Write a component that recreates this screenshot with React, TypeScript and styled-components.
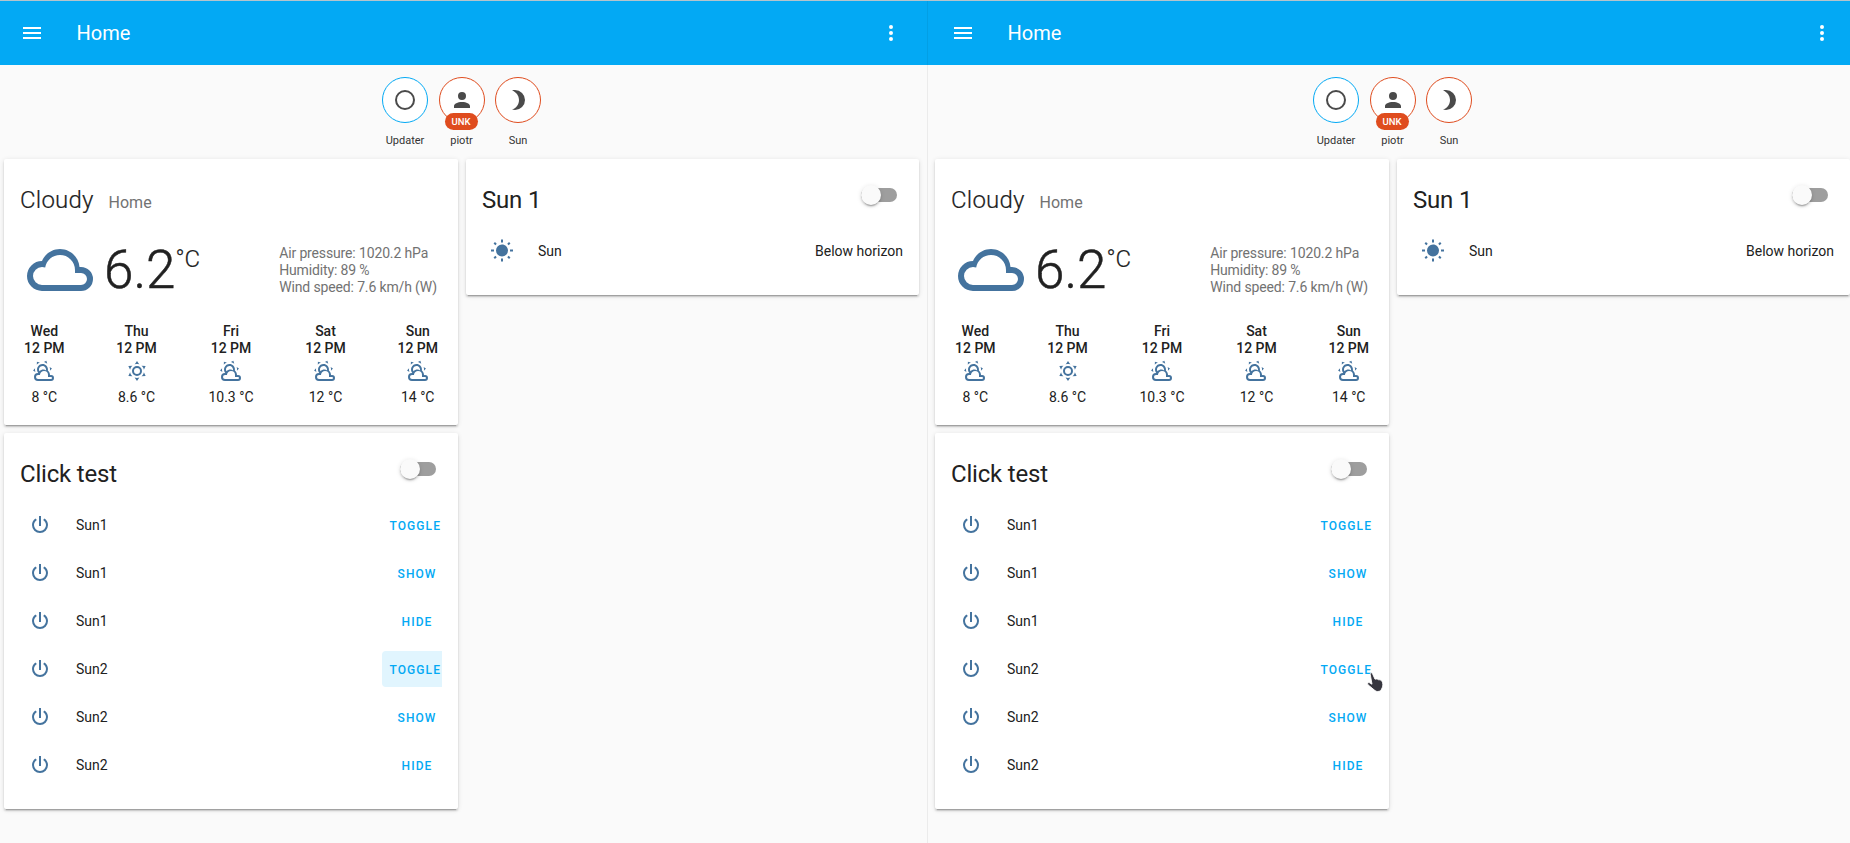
import React from "react";
import styled, { createGlobalStyle } from "styled-components";

const Global = createGlobalStyle`
  html, body { margin: 0; padding: 0; height: 843px; overflow: hidden; background: #fafafa; }
  body { font-family: Roboto, "Noto Sans", sans-serif; color: #212121; }
`;

const P = {
  menu: "M3,6H21V8H3V6M3,11H21V13H3V11M3,16H21V18H3V16Z",
  dots: "M12,16A2,2 0 0,1 14,18A2,2 0 0,1 12,20A2,2 0 0,1 10,18A2,2 0 0,1 12,16M12,10A2,2 0 0,1 14,12A2,2 0 0,1 12,14A2,2 0 0,1 10,12A2,2 0 0,1 12,10M12,4A2,2 0 0,1 14,6A2,2 0 0,1 12,8A2,2 0 0,1 10,6A2,2 0 0,1 12,4Z",
  account: "M12,4A4,4 0 0,1 16,8A4,4 0 0,1 12,12A4,4 0 0,1 8,8A4,4 0 0,1 12,4M12,14C16.42,14 20,15.79 20,18V20H4V18C4,15.79 7.58,14 12,14Z",
  radio: "M12,20A8,8 0 0,1 4,12A8,8 0 0,1 12,4A8,8 0 0,1 20,12A8,8 0 0,1 12,20M12,2A10,10 0 0,0 2,12A10,10 0 0,0 12,22A10,10 0 0,0 22,12A10,10 0 0,0 12,2Z",
  moon: "M9,2C7.95,2 6.95,2.16 6,2.46C10.06,3.73 13,7.5 13,12C13,16.5 10.06,20.27 6,21.54C6.95,21.84 7.95,22 9,22A10,10 0 0,0 19,12A10,10 0 0,0 9,2Z",
  cloudy: "M6,19A5,5 0 0,1 1,14A5,5 0 0,1 6,9C7,6.65 9.3,5 12,5C15.43,5 18.24,7.66 18.5,11.03L19,11A4,4 0 0,1 23,15A4,4 0 0,1 19,19H6M19,13H17V12A5,5 0 0,0 12,7C9.5,7 7.45,8.82 7.06,11.19C6.73,11.07 6.37,11 6,11A3,3 0 0,0 3,14A3,3 0 0,0 6,17H19A2,2 0 0,0 21,15A2,2 0 0,0 19,13Z",
  partly: "M12.74,5.47C15.1,6.5 16.35,9.03 15.92,11.46C17.19,12.56 18,14.19 18,16V16.17C18.31,16.06 18.65,16 19,16A3,3 0 0,1 22,19A3,3 0 0,1 19,22H6A4,4 0 0,1 2,18A4,4 0 0,1 6,14H6.27C5,12.45 4.6,10.24 5.5,8.26C6.72,5.5 9.97,4.24 12.74,5.47M11.93,7.3C10.16,6.5 8.09,7.31 7.31,9.07C6.85,10.09 6.93,11.25 7.41,12.17C8.5,11.17 10,10.58 11.5,10.58C12.5,10.58 13.42,10.89 14.14,11.53C14.13,9.69 13.5,8 11.93,7.3M13.55,3.64C13,3.4 12.45,3.23 11.88,3.12L14.37,1.82L15.27,4.71C14.76,4.29 14.19,3.93 13.55,3.64M6.09,4.44C5.6,4.79 5.17,5.19 4.8,5.63L4.91,2.82L7.87,3.5C7.25,3.71 6.65,4.03 6.09,4.44M18,9.71C17.91,9.12 17.78,8.55 17.59,8L19.97,9.5L17.92,11.73C18.03,11.08 18.05,10.4 18,9.71M3.04,11.3C3.11,11.9 3.24,12.47 3.43,13L1.06,11.5L3.1,9.28C3,9.93 2.97,10.61 3.04,11.3M19,18H16V16A4,4 0 0,0 12,12C10,12 8.4,13.37 8.08,15.27L8,16H6A2,2 0 0,0 4,18A2,2 0 0,0 6,20H19A1,1 0 0,0 20,19A1,1 0 0,0 19,18Z",
  sunnyOutline: "M12,7A5,5 0 0,1 17,12A5,5 0 0,1 12,17A5,5 0 0,1 7,12A5,5 0 0,1 12,7M12,9A3,3 0 0,0 9,12A3,3 0 0,0 12,15A3,3 0 0,0 15,12A3,3 0 0,0 12,9M12,2L14.39,5.42C13.65,5.15 12.84,5 12,5C11.16,5 10.35,5.15 9.61,5.42L12,2M3.34,7L7.5,6.65C6.9,7.16 6.36,7.78 5.94,8.5C5.5,9.24 5.25,10 5.11,10.79L3.34,7M3.36,17L5.12,13.23C5.26,14 5.53,14.78 5.95,15.5C6.37,16.24 6.91,16.86 7.5,17.37L3.36,17M20.65,7L18.88,10.79C18.74,10 18.47,9.23 18.05,8.5C17.63,7.78 17.1,7.15 16.5,6.64L20.65,7M20.64,17L16.5,17.36C17.09,16.85 17.62,16.22 18.04,15.5C18.46,14.77 18.73,14 18.87,13.21L20.64,17M12,22L9.59,18.56C10.33,18.83 11.14,19 12,19C12.82,19 13.63,18.83 14.37,18.56L12,22Z",
  power: "M16.56,5.44L15.11,6.89C16.84,7.94 18,9.83 18,12A6,6 0 0,1 12,18A6,6 0 0,1 6,12C6,9.83 7.16,7.94 8.88,6.88L7.44,5.44C5.36,6.88 4,9.28 4,12A8,8 0 0,0 12,20A8,8 0 0,0 20,12C20,9.28 18.64,6.88 16.56,5.44M13,3H11V13H13",
  sun: "M3.55,18.54L4.96,19.95L6.76,18.16L5.34,16.74M11,22.45C11.32,22.45 13,22.45 13,22.45V19.5H11M12,5.5A6,6 0 0,0 6,11.5A6,6 0 0,0 12,17.5A6,6 0 0,0 18,11.5C18,8.18 15.31,5.5 12,5.5M20,12.5H23V10.5H20M17.24,18.16L19.04,19.95L20.45,18.54L18.66,16.74M20.45,4.46L19.04,3.05L17.24,4.84L18.66,6.26M13,0.55H11V3.5H13M4,10.5H1V12.5H4M6.76,4.84L4.96,3.05L3.55,4.46L5.34,6.26L6.76,4.84Z",
};

const Svg = styled.svg<{ $size?: number; $color?: string }>`
  width: ${(p) => p.$size ?? 24}px;
  height: ${(p) => p.$size ?? 24}px;
  fill: ${(p) => p.$color ?? "#44739e"};
  flex: none;
  display: block;
`;
const Icon = ({ d, size, color }: { d: string; size?: number; color?: string }) => (
  <Svg viewBox="0 0 24 24" $size={size} $color={color}><path d={d} /></Svg>
);

const Page = styled.div`
  display: flex;
  width: 1850px;
  height: 843px;
  overflow: hidden;
  position: relative;
  border-top: 1px solid #b5c4cc;
  box-sizing: border-box;
`;
const Panel = styled.section`
  flex: none;
  width: 931px;
  height: 842px;
`;
const Divider = styled.div`
  position: absolute;
  left: 927px;
  top: 0;
  bottom: 0;
  width: 1px;
  background: rgba(0, 0, 0, 0.06);
`;
const Toolbar = styled.header`
  height: 64px;
  background: #03a9f4;
  display: flex;
  align-items: center;
  color: #fff;
  padding: 0 28px 0 20px;
`;
const ToolbarTitle = styled.div`
  font-size: 20px;
  margin-left: 32.5px;
  flex: 1;
`;
const BadgeRow = styled.div`
  display: flex;
  justify-content: center;
  padding: 12px 8px 0 0;
  height: 82px;
`;
const Badge = styled.div`
  width: 56.5px;
  display: flex;
  flex-direction: column;
  align-items: center;
`;
const Circle = styled.div<{ $color: string }>`
  width: 46px;
  height: 46px;
  box-sizing: border-box;
  border-radius: 50%;
  border: 1.5px solid ${(p) => p.$color};
  background: #fff;
  display: flex;
  align-items: center;
  justify-content: center;
  position: relative;
`;
const Pill = styled.div`
  position: absolute;
  left: 5px;
  top: 34.5px;
  width: 33px;
  height: 17px;
  border-radius: 9px;
  background: #df4c1e;
  color: #fff;
  font-size: 9.5px;
  font-weight: 500;
  line-height: 17px;
  text-align: center;
`;
const BadgeLabel = styled.div`
  font-size: 11px;
  line-height: 14px;
  margin-top: 11px;
  color: #333;
`;
const Columns = styled.div`
  display: grid;
  grid-template-columns: 454px 453px;
  column-gap: 8px;
  padding-left: 4px;
  align-items: start;
`;
const Column = styled.div`
  display: flex;
  flex-direction: column;
  gap: 8px;
`;
const Card = styled.article<{ $h: number }>`
  background: #fff;
  height: ${(p) => p.$h}px;
  border-radius: 2px;
  box-shadow: 0 2px 2px 0 rgba(0,0,0,.14), 0 1px 5px 0 rgba(0,0,0,.12), 0 3px 1px -2px rgba(0,0,0,.2);
`;
const CardHead = styled.div`
  display: flex;
  justify-content: space-between;
  padding: 25px 22px 0 16px;
  height: 55px;
`;
const CardTitle = styled.div`
  font-size: 24px;
  line-height: 32px;
  letter-spacing: -0.008em;
`;
const Toggle = styled.div`
  position: relative;
  width: 36px;
  height: 14px;
  margin-top: 4px;
  border-radius: 7px;
  background: #9e9e9e;
`;
const Knob = styled.div`
  position: absolute;
  left: 0;
  top: -3px;
  width: 20px;
  height: 20px;
  border-radius: 50%;
  background: #fafafa;
  box-shadow: 0 2px 2px rgba(0,0,0,.14), 0 1px 5px rgba(0,0,0,.12), 0 3px 1px -2px rgba(0,0,0,.2);
`;
const Rows = styled.div`
  margin: -12px 16px 0;
  overflow: hidden;
`;
const Row = styled.div`
  height: 48px;
  display: flex;
  align-items: center;
  font-size: 14px;
`;
const RowIcon = styled.div`
  width: 40px;
  display: flex;
  justify-content: center;
  margin-right: 16px;
`;
const RowName = styled.div`
  flex: 1;
`;
const ActionButton = styled.div<{ $hover?: boolean }>`
  min-width: 64px;
  height: 36px;
  box-sizing: border-box;
  padding: 2px 8px 0;
  margin-right: -7px;
  border-radius: 4px;
  display: flex;
  align-items: center;
  justify-content: center;
  color: #03a9f4;
  font-size: 12px;
  font-weight: 500;
  letter-spacing: 0.0892857em;
  background: ${(p) => (p.$hover ? "#e1f5fe" : "transparent")};
`;
const WeatherHead = styled.div`
  display: flex;
  align-items: baseline;
  padding: 25px 16px 0;
  gap: 15px;
`;
const WeatherName = styled.div`
  font-size: 24px;
  line-height: 32px;
  font-weight: 300;
  letter-spacing: 0.2px;
  -webkit-text-stroke: 0.2px #212121;
`;
const WeatherPlace = styled.div`
  font-size: 16px;
  color: #727272;
`;
const WeatherMain = styled.div`
  display: flex;
  align-items: center;
  padding: 18px 21px 0 20px;
`;
const Temp = styled.div`
  display: flex;
  align-items: flex-start;
  margin-left: 8px;
  flex: 1;
  font-size: 53px;
  line-height: 64px;
  font-weight: 300;
  -webkit-text-stroke: 0.5px #212121;
`;
const TempUnit = styled.span`
  font-size: 24px;
  line-height: 42px;
  -webkit-text-stroke: 0.2px #212121;
`;
const Attributes = styled.div`
  font-size: 14px;
  line-height: 17px;
  letter-spacing: -0.14px;
  color: #727272;
`;
const Forecast = styled.div`
  display: flex;
  justify-content: space-between;
  padding: 17px 20px 0;
`;
const Day = styled.div`
  display: flex;
  flex-direction: column;
  align-items: center;
  font-size: 14px;
  line-height: 17px;
`;
const DayName = styled.div`
  font-weight: 500;
  text-align: center;
`;
const DayIcon = styled.div`
  margin: 2px 0 6px;
`;
const Cursor = styled.svg`
  position: absolute;
  left: 1366px;
  top: 670px;
  width: 18px;
  height: 22px;
`;

const forecast = [
  ["Wed", P.partly, "8 °C"],
  ["Thu", P.sunnyOutline, "8.6 °C"],
  ["Fri", P.partly, "10.3 °C"],
  ["Sat", P.partly, "12 °C"],
  ["Sun", P.partly, "14 °C"],
];
const actions = [
  ["Sun1", "TOGGLE"], ["Sun1", "SHOW"], ["Sun1", "HIDE"],
  ["Sun2", "TOGGLE"], ["Sun2", "SHOW"], ["Sun2", "HIDE"],
];

const CardToggle = () => <Toggle><Knob /></Toggle>;

const HomePanel = ({ hover }: { hover?: number }) => (
  <Panel>
    <Toolbar>
      <Icon d={P.menu} color="#fff" />
      <ToolbarTitle>Home</ToolbarTitle>
      <Icon d={P.dots} color="#fff" />
    </Toolbar>
    <BadgeRow>
      <Badge>
        <Circle $color="#03a9f4"><Icon d={P.radio} color="#4a4a4a" /></Circle>
        <BadgeLabel>Updater</BadgeLabel>
      </Badge>
      <Badge>
        <Circle $color="#df4c1e"><Icon d={P.account} color="#4a4a4a" /><Pill>UNK</Pill></Circle>
        <BadgeLabel>piotr</BadgeLabel>
      </Badge>
      <Badge>
        <Circle $color="#df4c1e"><Icon d={P.moon} color="#4a4a4a" /></Circle>
        <BadgeLabel>Sun</BadgeLabel>
      </Badge>
    </BadgeRow>
    <Columns>
      <Column>
        <Card $h={266}>
          <WeatherHead>
            <WeatherName>Cloudy</WeatherName>
            <WeatherPlace>Home</WeatherPlace>
          </WeatherHead>
          <WeatherMain>
            <Icon d={P.cloudy} size={72} />
            <Temp>6.2<TempUnit>°C</TempUnit></Temp>
            <Attributes>
              <div>Air pressure: 1020.2 hPa</div>
              <div>Humidity: 89 %</div>
              <div>Wind speed: 7.6 km/h (W)</div>
            </Attributes>
          </WeatherMain>
          <Forecast>
            {forecast.map(([d, icon, t]) => (
              <Day key={d}>
                <DayName>{d}<br />12 PM</DayName>
                <DayIcon><Icon d={icon} /></DayIcon>
                <div>{t}</div>
              </Day>
            ))}
          </Forecast>
        </Card>
        <Card $h={376}>
          <CardHead>
            <CardTitle>Click test</CardTitle>
            <CardToggle />
          </CardHead>
          <Rows>
            {actions.map(([n, a], i) => (
              <Row key={i}>
                <RowIcon><Icon d={P.power} /></RowIcon>
                <RowName>{n}</RowName>
                <ActionButton $hover={hover === i}>{a}</ActionButton>
              </Row>
            ))}
          </Rows>
        </Card>
      </Column>
      <Column>
        <Card $h={136}>
          <CardHead>
            <CardTitle>Sun 1</CardTitle>
            <CardToggle />
          </CardHead>
          <Rows>
            <Row>
              <RowIcon><Icon d={P.sun} /></RowIcon>
              <RowName>Sun</RowName>
              <div>Below horizon</div>
            </Row>
          </Rows>
        </Card>
      </Column>
    </Columns>
  </Panel>
);

export default function App() {
  return (
    <>
      <Global />
      <Page>
        <HomePanel hover={3} />
        <HomePanel />
        <Divider />
        <Cursor viewBox="0 0 18 22">
          <path d="M4.2 3.2C4 2 5.6 1.2 6.4 2.4L9 8.2C10.5 7.6 12 8 12.6 8.8C14 8.6 15.4 9.2 16 10.4C17 12 17.2 14.6 16.2 16.8L14.8 19.6C12.8 20.8 10.4 20.8 9 19.6L2 13.8C1 12.8 1.8 11.2 3.2 11.6L6 13.2Z" fill="#37363f" stroke="#fff" strokeWidth="0.9" strokeLinejoin="round" />
        </Cursor>
      </Page>
    </>
  );
}
